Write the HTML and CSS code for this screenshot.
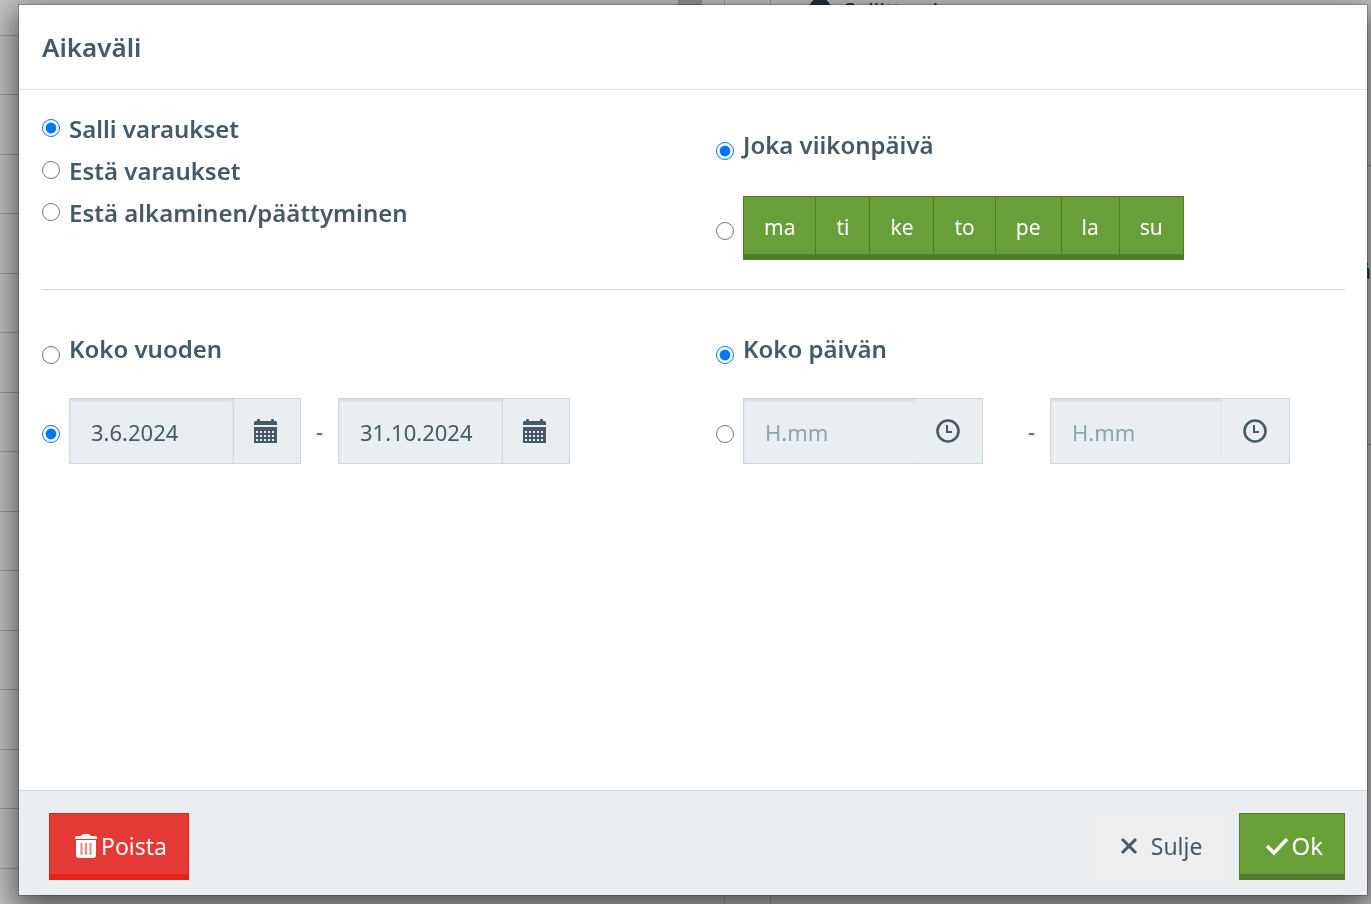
FILE: index.html
```html
<!DOCTYPE html>
<html lang="fi">
<head>
  <meta charset="UTF-8">
  <title>Aikaväli</title>
  <meta name="viewport" content="width=device-width, initial-scale=1">
  <link rel="stylesheet" href="styles.css">
</head>
<body>
  <!-- Page behind the dialog -->
  <div class="page" aria-hidden="true">
    <div class="calendar">
      <div></div><div></div><div></div><div></div><div></div>
      <div></div><div></div><div></div><div></div><div></div>
      <div></div><div></div><div></div><div></div><div></div>
    </div>
    <div class="scrollbar"></div>
    <div class="gutter"></div>
    <div class="gutter"></div>
    <div class="rules">
      <div class="rule-title"><span class="dot"></span>Sallittu ai</div>
      <div class="rule"></div>
      <div class="rule"><span>ä</span></div>
    </div>
  </div>
  <div class="backdrop">
    <form class="modal" role="dialog" aria-labelledby="modalTitle">
      <div class="modal-header">
        <h1 id="modalTitle">Aikaväli</h1>
      </div>
      <div class="modal-body">
        <div class="row">
          <div class="col types">
            <div class="option">
              <input type="radio" name="type" id="allow" checked>
              <label for="allow">Salli varaukset</label>
            </div>
            <div class="option">
              <input type="radio" name="type" id="deny">
              <label for="deny">Estä varaukset</label>
            </div>
            <div class="option">
              <input type="radio" name="type" id="denyStart">
              <label for="denyStart">Estä alkaminen/päättyminen</label>
            </div>
          </div>
          <div class="col days">
            <div class="option whole">
              <input type="radio" name="days" id="everyDay" checked>
              <label for="everyDay">Joka viikonpäivä</label>
            </div>
            <div class="option custom">
              <input type="radio" name="days" id="someDays" aria-label="Valitut viikonpäivät">
              <div class="btn-group">
                <button type="button">ma</button>
                <button type="button">ti</button>
                <button type="button">ke</button>
                <button type="button">to</button>
                <button type="button">pe</button>
                <button type="button">la</button>
                <button type="button">su</button>
              </div>
            </div>
          </div>
        </div>
        <hr>
        <div class="row">
          <div class="col period">
            <div class="option whole">
              <input type="radio" name="period" id="wholeYear">
              <label for="wholeYear">Koko vuoden</label>
            </div>
            <div class="option custom">
              <input type="radio" name="period" id="dateRange" aria-label="Päivämääräväli" checked>
              <div class="input-group date">
                <input type="text" value="3.6.2024" aria-label="Alkupäivä">
                <button type="button" aria-label="Valitse alkupäivä">
                  <svg class="icon" viewBox="0 0 24 24"><path d="M0 6V3.500Q0 2 1.500 2H3V1Q3 0 4 0H5Q6 0 6 1V2H17V1Q17 0 18 0H19Q20 0 20 1V2H21.500Q23 2 23 3.500V6ZM0 8H23V24H0ZM2 12V14H4V12ZM6 12V14H8V12ZM10 12V14H12V12ZM14 12V14H16V12ZM18 12V14H20V12ZM2 16V18H4V16ZM6 16V18H8V16ZM10 16V18H12V16ZM14 16V18H16V16ZM18 16V18H20V16ZM2 20V22H4V20ZM6 20V22H8V20ZM10 20V22H12V20ZM14 20V22H16V20ZM18 20V22H20V20Z" fill-rule="evenodd"/></svg>
                </button>
              </div>
              <span class="dash">-</span>
              <div class="input-group date">
                <input type="text" value="31.10.2024" aria-label="Loppupäivä">
                <button type="button" aria-label="Valitse loppupäivä">
                  <svg class="icon" viewBox="0 0 24 24"><path d="M0 6V3.500Q0 2 1.500 2H3V1Q3 0 4 0H5Q6 0 6 1V2H17V1Q17 0 18 0H19Q20 0 20 1V2H21.500Q23 2 23 3.500V6ZM0 8H23V24H0ZM2 12V14H4V12ZM6 12V14H8V12ZM10 12V14H12V12ZM14 12V14H16V12ZM18 12V14H20V12ZM2 16V18H4V16ZM6 16V18H8V16ZM10 16V18H12V16ZM14 16V18H16V16ZM18 16V18H20V16ZM2 20V22H4V20ZM6 20V22H8V20ZM10 20V22H12V20ZM14 20V22H16V20ZM18 20V22H20V20Z" fill-rule="evenodd"/></svg>
                </button>
              </div>
            </div>
          </div>
          <div class="col period">
            <div class="option whole">
              <input type="radio" name="hours" id="wholeDay" checked>
              <label for="wholeDay">Koko päivän</label>
            </div>
            <div class="option custom">
              <input type="radio" name="hours" id="timeRange" aria-label="Kellonaikaväli">
              <div class="input-group time">
                <input type="text" placeholder="H.mm" aria-label="Alkuaika">
                <button type="button" aria-label="Valitse alkuaika">
                  <svg class="icon" viewBox="0 0 24 24"><circle cx="12" cy="12" r="10.500" fill="none" stroke="currentColor" stroke-width="2.600"/><path d="M11 6V13H16" fill="none" stroke="currentColor" stroke-width="2"/></svg>
                </button>
              </div>
              <span class="dash wide">-</span>
              <div class="input-group time">
                <input type="text" placeholder="H.mm" aria-label="Loppuaika">
                <button type="button" aria-label="Valitse loppuaika">
                  <svg class="icon" viewBox="0 0 24 24"><circle cx="12" cy="12" r="10.500" fill="none" stroke="currentColor" stroke-width="2.600"/><path d="M11 6V13H16" fill="none" stroke="currentColor" stroke-width="2"/></svg>
                </button>
              </div>
            </div>
          </div>
        </div>
      </div>
      <div class="modal-footer">
        <button type="button" class="btn btn-danger">
          <svg class="icon" viewBox="0 0 24 24"><path d="M0 5V3.500Q0 2 1.500 2H6Q7 0 9 0H13Q15 0 16 2H20.500Q22 2 22 3.500V5ZM1 6H21V21Q21 24 18 24H4Q1 24 1 21Z"/><path class="slots" d="M6.500 9V21M11 9V21M15.500 9V21"/></svg>
          Poista
        </button>
        <button type="button" class="btn btn-close">
          <svg class="icon" viewBox="0 0 24 24"><path d="M5 5L19 19M19 5L5 19" fill="none" stroke="currentColor" stroke-width="3"/></svg>
          Sulje
        </button>
        <button type="submit" class="btn btn-ok">
          <svg class="icon" viewBox="0 0 24 24"><path d="M2 12L9 19L22 5" fill="none" stroke="currentColor" stroke-width="3.500"/></svg>
          Ok
        </button>
      </div>
    </form>
  </div>
</body>
</html>
```
FILE: styles.css
```css
* {
  box-sizing: border-box;
}
body {
  margin: 0;
  font-family: "Noto Sans", "Open Sans", sans-serif;
  font-size: 22px;
  color: #455a64;
  background: #fff;
}
button, input {
  font: inherit;
  color: inherit;
}
.page {
  position: fixed;
  inset: 0;
  display: grid;
  grid-template-columns: calc(50% - 8px) 24px 23px 46px 1fr;
  overflow: hidden;
  background: #f4f4f8;
}
.calendar div {
  height: 60px;
  border-bottom: 1px solid #c5c5c8;
}
.calendar div:first-child {
  height: 36px;
}
.calendar div:nth-child(even) {
  height: 59px;
}
.scrollbar {
  height: 90%;
  background: #bbb;
}
.gutter {
  border-right: 1px solid #c5c5c8;
}
.rules {
  line-height: 32px;
}
.rule-title {
  display: flex;
  gap: 13px;
  height: 0;
  margin: -6px 0 6px;
  padding-left: 38px;
  color: #263f4c;
}
.dot {
  flex: none;
  width: 22px;
  height: 22px;
  margin-top: 4px;
  border-radius: 50%;
  background: #263f4c;
}
.rule {
  display: flex;
  justify-content: flex-end;
  height: 279px;
  padding-top: 88px;
  border-bottom: 1px solid #a5a5a9;
  color: #263f4c;
}
.rule-title + .rule {
  height: 166px;
}
.backdrop {
  position: relative;
  display: flex;
  min-height: 100vh;
  padding: 5px 4px 9px 19px;
  background: rgba(0, 0, 0, 0.2);
}
.modal {
  flex: 1;
  display: flex;
  flex-direction: column;
  background: #fff;
  box-shadow: 0 0 0 1px rgba(0, 0, 0, 0.2), 0 10px 30px 4px rgba(0, 0, 0, 0.6);
}
.modal-header {
  padding: 22px 23px;
  border-bottom: 1px solid #e5e5e5;
}
h1 {
  margin: 0;
  font-size: 26px;
  font-weight: 600;
  line-height: 40px;
}
.modal-body {
  flex: 1;
}
.row {
  display: grid;
  grid-template-columns: 1fr 1fr;
}
.col {
  padding-left: 23px;
}
.option {
  display: flex;
  align-items: center;
}
.option label {
  font-size: 24px;
  font-weight: 570;
  line-height: 32px;
}
input[type="radio"] {
  flex: none;
  width: 18px;
  height: 18px;
  margin: 0 9px 0 0;
}
.types {
  padding-top: 23px;
}
.types .option {
  margin-bottom: 10px;
}
.types input[type="radio"] {
  margin-bottom: 2px;
}
.days {
  padding-top: 39px;
}
.period {
  padding-top: 43px;
}
.whole input[type="radio"] {
  margin-top: 12px;
}
.custom {
  margin-top: 35px;
}
.custom input[type="radio"] {
  margin-top: 6px;
}
hr {
  margin: 29px 22px 0 23px;
  border: 0;
  border-top: 1px solid #cfd8dc;
}
.btn-group {
  display: flex;
}
.btn-group button {
  height: 64px;
  padding: 3px 20px 0;
  border: 1px solid #4f7c2c;
  border-left-width: 0;
  border-bottom-width: 6px;
  background: #689f38;
  color: #fff;
  font-size: 21px;
  cursor: pointer;
}
.btn-group button:first-child {
  border-left-width: 1px;
}
.period .custom {
  margin-top: 33px;
}
.input-group {
  display: flex;
  width: 232px;
  height: 66px;
  border: 1px solid #cfd8dc;
  background: #eaeef1;
}
.input-group.time {
  width: 240px;
}
.input-group input {
  flex: 1;
  min-width: 0;
  padding: 2px 21px 0;
  border: 0;
  background: none;
  box-shadow: inset 0 2px 2px rgba(69, 90, 100, 0.12);
}
.input-group input::placeholder {
  color: #90a4ae;
  opacity: 1;
}
.input-group button {
  display: flex;
  align-items: center;
  justify-content: center;
  width: 67px;
  padding: 0 2px 0 0;
  border: 0;
  border-left: 1px solid #cfd8dc;
  background: none;
}
.input-group.time button {
  border-left-color: #e6ecef;
}
.dash {
  width: 37px;
  text-align: center;
}
.dash.wide {
  width: 67px;
  padding-left: 30px;
}
.icon {
  width: 24px;
  height: 24px;
  fill: currentColor;
}
.modal-footer {
  display: flex;
  padding: 22px 22px 15px 30px;
  border-top: 1px solid #cfd8dc;
  background: #eaeef1;
}
.btn {
  display: flex;
  align-items: center;
  height: 67px;
  padding: 3px 21px 0 25px;
  border: 1px solid;
  border-bottom-width: 6px;
  font-size: 24px;
  cursor: pointer;
}
.btn-danger {
  gap: 2px;
  margin-right: auto;
  border-color: #e2231d;
  background: #e53935;
  color: #fff;
  font-size: 23px;
}
.slots {
  fill: none;
  stroke: #ee8885;
  stroke-width: 2;
}
.btn-close {
  gap: 10px;
  margin-right: 15px;
  border-color: #efefef;
  background: #efefef;
  font-size: 23px;
}
.btn-ok {
  gap: 2px;
  border-color: #4f7c2c;
  background: #689f38;
  color: #fff;
}
```
